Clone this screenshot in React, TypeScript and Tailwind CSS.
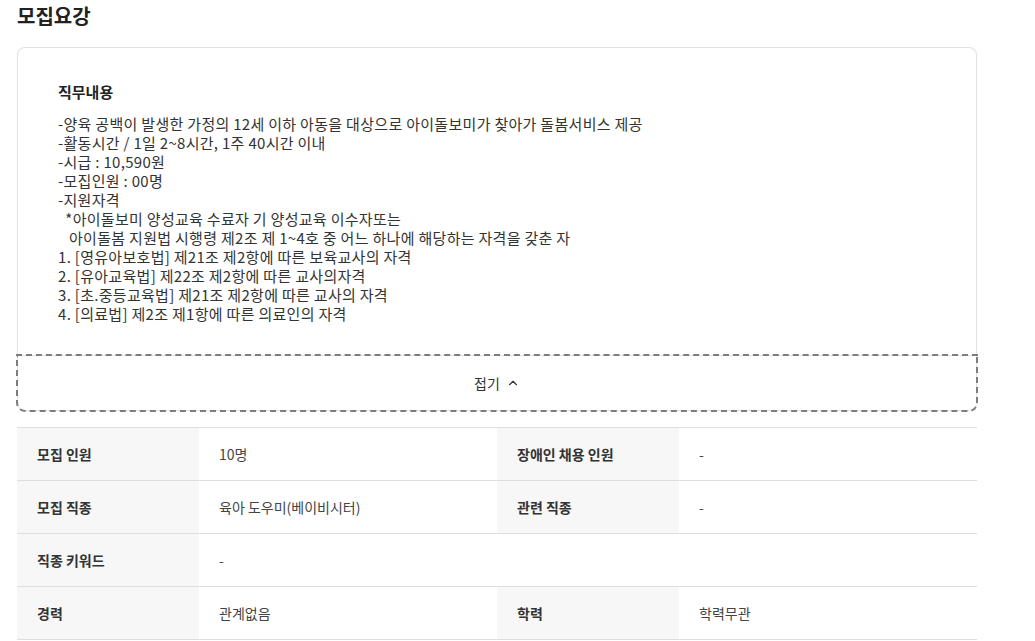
import { ChevronUp } from "lucide-react";

const DUTY_LINES = [
  "-양육 공백이 발생한 가정의 12세 이하 아동을 대상으로 아이돌보미가 찾아가 돌봄서비스 제공",
  "-활동시간 / 1일 2~8시간, 1주 40시간 이내",
  "-시급 : 10,590원",
  "-모집인원 : 00명",
  "-지원자격",
  "  *아이돌보미 양성교육 수료자 기 양성교육 이수자또는",
  "   아이돌봄 지원법 시행령 제2조 제 1~4호 중 어느 하나에 해당하는 자격을 갖춘 자",
  "1. [영유아보호법] 제21조 제2항에 따른 보육교사의 자격",
  "2. [유아교육법] 제22조 제2항에 따른 교사의자격",
  "3. [초.중등교육법] 제21조 제2항에 따른 교사의 자격",
  "4. [의료법] 제2조 제1항에 따른 의료인의 자격",
];

type Cell = { label: string; value: string };

const ROWS: (Cell | [Cell, Cell])[] = [
  [
    { label: "모집 인원", value: "10명" },
    { label: "장애인 채용 인원", value: "-" },
  ],
  [
    { label: "모집 직종", value: "육아 도우미(베이비시터)" },
    { label: "관련 직종", value: "-" },
  ],
  { label: "직종 키워드", value: "-" },
  [
    { label: "경력", value: "관계없음" },
    { label: "학력", value: "학력무관" },
  ],
];

function Label({ children }: { children: string }) {
  return (
    <div className="flex items-center bg-[#f7f7f7] px-5 text-[14px] font-bold text-[#333]">
      {children}
    </div>
  );
}

function Value({ children, wide }: { children: string; wide?: boolean }) {
  return (
    <div
      className={`flex items-center px-5 text-[14px] text-[#444] ${wide ? "col-span-3" : ""}`}
    >
      {children}
    </div>
  );
}

export default function App() {
  return (
    <div
      className="min-h-screen bg-white"
      style={{ fontFamily: '"Noto Sans CJK KR", "Noto Sans", sans-serif' }}
    >
      <div className="w-[960px] pl-[17px] box-content">
        <h2 className="pt-[2px] text-[20px] font-bold leading-[28px] text-[#222]">모집요강</h2>

        {/* Card */}
        <div className="mt-[17px]">
          <div className="rounded-t-lg border border-b-0 border-[#e2e2e2] px-10 pt-[34px] pb-[32px]">
            <h3 className="text-[15px] font-bold leading-[20px] text-[#222]">직무내용</h3>
            <div className="mt-[12px] whitespace-pre-wrap text-[15px] leading-[19px] tracking-[0.3px] text-[#333]">
              {DUTY_LINES.map((line) => (
                <div key={line}>{line}</div>
              ))}
            </div>
          </div>
          <button className="flex h-[56px] w-full items-center justify-center gap-1.5 rounded-b-lg border border-[#e2e2e2] text-[14px] text-[#333] outline-2 outline-dashed outline-[#7d7d7d] outline-offset-[-1px]">
            접기
            <ChevronUp className="h-3.5 w-3.5" strokeWidth={2} />
          </button>
        </div>

        {/* Summary table */}
        <div className="mt-4 border-t border-[#dedede]">
          {ROWS.map((row, i) => (
            <div
              key={i}
              className="grid h-[53px] grid-cols-[182px_298px_182px_298px] border-b border-[#dedede]"
            >
              {Array.isArray(row) ? (
                <>
                  <Label>{row[0].label}</Label>
                  <Value>{row[0].value}</Value>
                  <Label>{row[1].label}</Label>
                  <Value>{row[1].value}</Value>
                </>
              ) : (
                <>
                  <Label>{row.label}</Label>
                  <Value wide>{row.value}</Value>
                </>
              )}
            </div>
          ))}
        </div>
      </div>
    </div>
  );
}
